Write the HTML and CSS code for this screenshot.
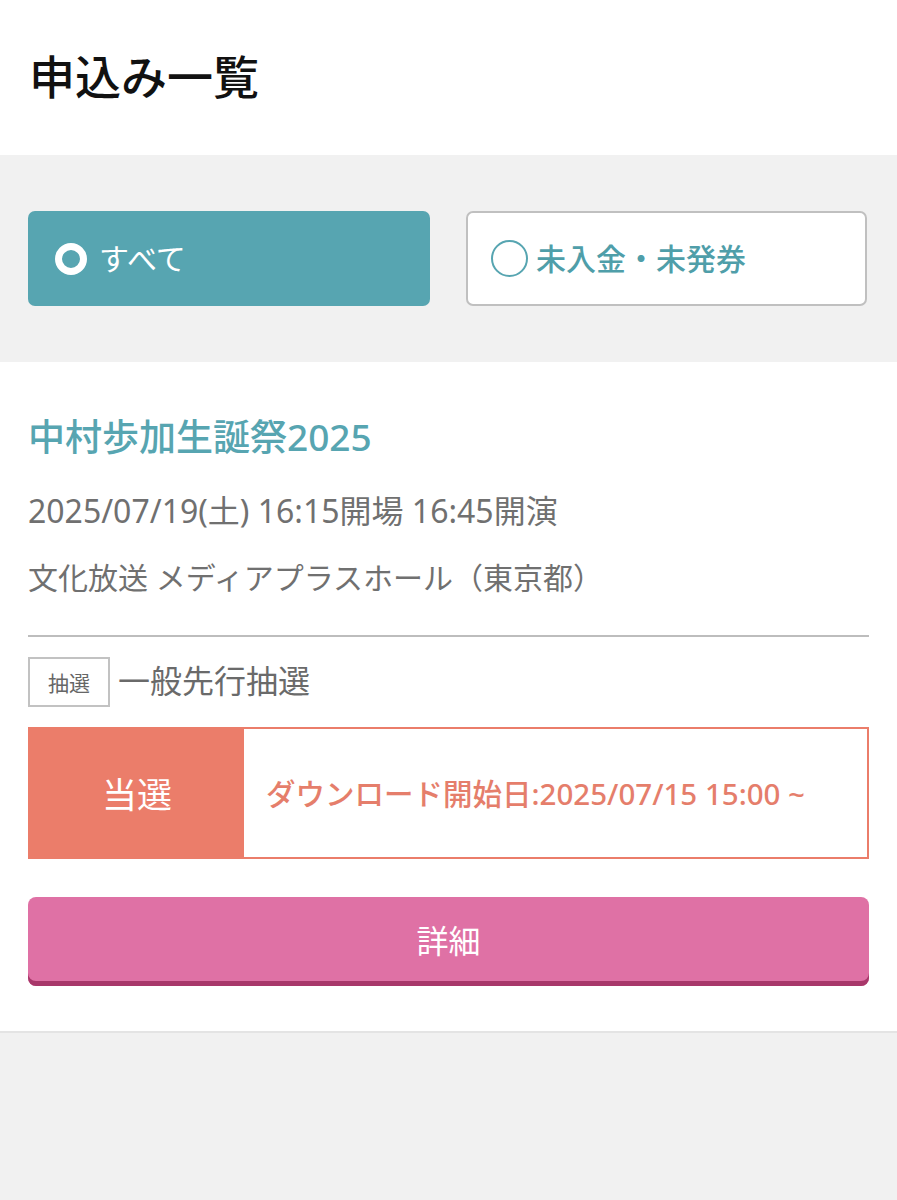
FILE: index.html
```html
<!DOCTYPE html>
<html lang="ja">
<head>
<meta charset="utf-8">
<link rel="stylesheet" href="styles.css">
</head>
<body>
<header class="page-header">
  <h1 class="page-title">申込み一覧</h1>
</header>
<section class="filters">
  <button class="filter filter-active">
    <span class="radio radio-on"></span><span class="filter-label">すべて</span>
  </button>
  <button class="filter filter-idle">
    <span class="radio radio-off"></span><span class="filter-label">未入金・未発券</span>
  </button>
</section>
<section class="card">
  <h2 class="event-title">中村歩加生誕祭2025</h2>
  <p class="event-line date">2025/07/19(土) 16:15開場 16:45開演</p>
  <p class="event-line venue">文化放送 メディアプラスホール（東京都）</p>
  <hr class="divider">
  <div class="entry-row">
    <span class="tag">抽選</span><span class="entry-name">一般先行抽選</span>
  </div>
  <div class="result">
    <div class="result-status">当選</div>
    <div class="result-info">ダウンロード開始日:2025/07/15 15:00 ~</div>
  </div>
  <button class="detail-btn">詳細</button>
</section>
</body>
</html>
```
FILE: styles.css
```css
* { box-sizing: border-box; }
html, body {
  margin: 0;
  padding: 0;
  background: #f1f1f1;
  font-family: "Noto Sans", "Noto Sans CJK JP", sans-serif;
}
.page-header {
  background: #ffffff;
  height: 155px;
  display: flex;
  align-items: center;
  padding: 0 30px 0 29px;
}
.page-title {
  margin: 0;
  font-size: 46px;
  font-weight: 500;
  color: #111;
  line-height: 1;
  padding-bottom: 4px;
}
.filters {
  background: #f1f1f1;
  display: grid;
  grid-template-columns: 402px 401px;
  column-gap: 36px;
  padding: 56px 30px 56px 28px;
}
.filter {
  height: 95px;
  border-radius: 7px;
  display: flex;
  align-items: center;
  font-family: inherit;
  font-size: 30px;
  cursor: pointer;
  margin: 0;
}
.filter-active {
  background: #57a5b1;
  border: none;
  color: #fff;
  padding: 0 0 0 27px;
}
.filter-idle {
  background: #fff;
  border: 2px solid #c0c0c0;
  color: #4f9ea9;
  padding: 0 0 0 23px;
  font-weight: 500;
}
.filter-label { line-height: 1; padding-bottom: 0; }
.radio {
  display: inline-block;
  border-radius: 50%;
  flex: none;
}
.radio-on {
  width: 32px;
  height: 32px;
  border: 7px solid #fff;
  margin-right: 12px;
}
.radio-off {
  width: 37px;
  height: 37px;
  border: 2.5px solid #57a5b1;
  margin-right: 8px;
}
.card {
  background: #fff;
  padding: 51px 28px 45px 28px;
  border-bottom: 2px solid #e4e4e4;
}
.event-title {
  margin: 0;
  font-size: 37px;
  line-height: 48px;
  font-weight: 500;
  color: #57a5b1;
}
.event-line {
  margin: 30px 0 0 0;
  font-size: 30px;
  line-height: 40px;
  color: #707070;
}
.date { font-size: 32px; }
.venue { margin-top: 27px; }
.divider {
  margin: 37px 0 0 0;
  border: none;
  border-top: 2px solid #bdbdbd;
  height: 0;
}
.entry-row {
  margin-top: 20px;
  display: flex;
  align-items: center;
}
.tag {
  width: 82px;
  height: 50px;
  border: 2px solid #c2c2c2;
  display: inline-flex;
  align-items: center;
  justify-content: center;
  font-size: 21px;
  color: #666;
}
.entry-name {
  margin-left: 8px;
  font-size: 32px;
  color: #6a6a6a;
  line-height: 1;
  padding-bottom: 2px;
}
.result {
  margin-top: 20px;
  height: 132px;
  display: flex;
  border: 2px solid #eb7d6a;
}
.result-status {
  width: 214px;
  background: #eb7d6a;
  color: #fff;
  font-size: 35px;
  display: flex;
  align-items: center;
  justify-content: center;
  padding-bottom: 2px;
}
.result-info {
  flex: 1;
  display: flex;
  align-items: center;
  padding-left: 22px;
  color: #e57e6b;
  font-size: 29.5px;
  font-weight: 500;
  padding-bottom: 2px;
}
.detail-btn {
  margin-top: 38px;
  display: block;
  width: 100%;
  height: 89px;
  border: none;
  border-radius: 8px;
  background: #df71a5;
  box-shadow: inset 0 -5px 0 #a8376a;
  color: #fff;
  font-family: inherit;
  font-size: 32px;
  padding: 0 0 6px 0;
  cursor: pointer;
}
```
